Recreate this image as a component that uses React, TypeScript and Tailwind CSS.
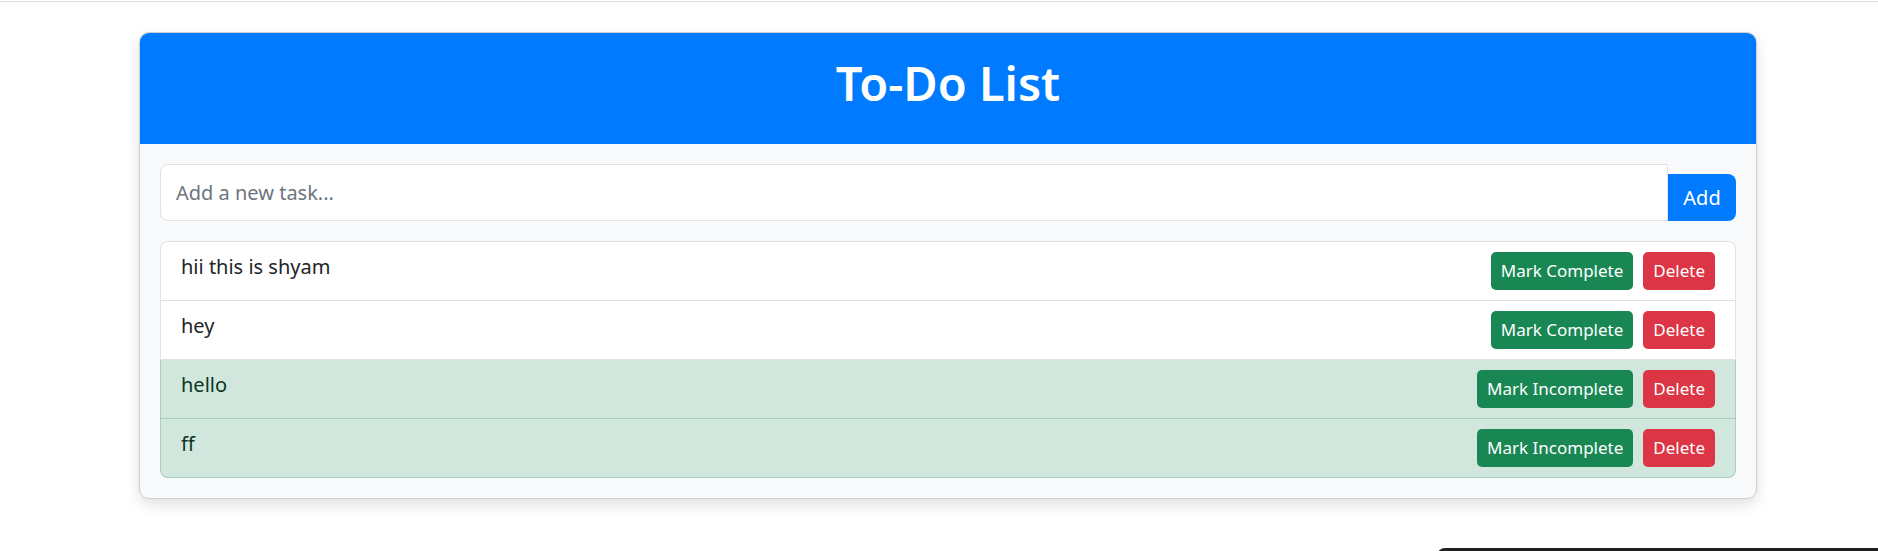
import React from "react";

type Task = { id: number; text: string; done: boolean };

const TASKS: Task[] = [
    { id: 1, text: "hii this is shyam", done: false },
    { id: 2, text: "hey", done: false },
    { id: 3, text: "hello", done: true },
    { id: 4, text: "ff", done: true },
];

export default function App() {
    return (
        <div className="relative h-[551px] overflow-hidden bg-white font-['Noto_Sans',sans-serif] text-[#212529]">
            <div className="mt-px h-px bg-[#dcdcdc]" />

            {/* Card */}
            <div className="ml-[139px] mt-[30px] w-[1618px] overflow-hidden rounded-[10px] border border-[#cfcfcf] bg-[#f8f9fa] shadow-[0_6px_14px_rgba(0,0,0,0.12)]">
                <div className="flex h-[111px] items-center justify-center bg-[#007bff]">
                    <h1 className="mb-[10px] text-[47px] font-semibold leading-[1.2] text-white">To-Do List</h1>
                </div>

                <div className="p-5">
                    {/* Input group */}
                    <div className="flex items-end">
                        <input
                            type="text"
                            placeholder="Add a new task..."
                            className="h-[57px] flex-1 rounded-l-[8px] border border-[#dee2e6] bg-white px-[15px] text-[20px] outline-none placeholder:text-[#6c757d]"
                        />
                        <button className="h-[47px] w-[68px] rounded-r-[8px] bg-[#007bff] text-[20px] text-white">Add</button>
                    </div>

                    {/* Task list */}
                    <ul className="mt-5">
                        {TASKS.map((task, i) => (
                            <li
                                key={task.id}
                                className={`flex justify-between border-x border-b px-5 py-[10px] ${i === 0 ? "rounded-t-[8px] border-t" : ""} ${
                                    i === TASKS.length - 1 ? "rounded-b-[8px]" : ""
                                } ${task.done ? "border-[#a3cfbb] bg-[#d1e7dd] text-[#0a3622]" : "border-[#dee2e6] bg-white"}`}
                            >
                                <span className="text-[20px] leading-[30px]">{task.text}</span>
                                <div className="flex gap-[10px]">
                                    <button className="h-[38px] rounded-[5px] bg-[#198754] px-[10px] text-[17px] text-white">
                                        {task.done ? "Mark Incomplete" : "Mark Complete"}
                                    </button>
                                    <button className="h-[38px] rounded-[5px] bg-[#dc3545] px-[10px] text-[17px] text-white">Delete</button>
                                </div>
                            </li>
                        ))}
                    </ul>
                </div>
            </div>

            {/* dark bar peeking in at the bottom right */}
            <div className="absolute left-[1437px] right-0 top-[548px] h-[10px] rounded-tl-[8px] bg-[#1f1f1f]" />
        </div>
    );
}
